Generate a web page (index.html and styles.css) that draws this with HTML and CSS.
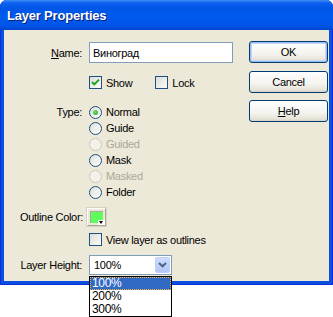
FILE: index.html
```html
<!DOCTYPE html>
<html lang="en">
<head>
    <meta charset="UTF-8">
    <title>Layer Properties</title>
    <link rel="stylesheet" href="styles.css">
</head>
<body>

<!-- Dialog window -->
<div class="window">
    <div class="titlebar">Layer Properties</div>

    <div class="client">
        <div class="fields">
            <div class="row row-name">
                <label class="caption" for="layerName"><u>N</u>ame:</label>
                <input class="textbox" id="layerName" type="text" value="Виноград">
            </div>

            <div class="row row-flags">
                <span class="caption"></span>
                <span class="check">
                    <svg width="11" height="11" viewBox="0 0 11 11"><path d="M2 5 L4.3 7.4 L9 2.6" fill="none" stroke="#21a121" stroke-width="2"/></svg>
                </span>
                <span class="opt">Show</span>
                <span class="check check-lock"></span>
                <span class="opt">Lock</span>
            </div>

            <div class="row-type">
                <span class="caption">Type:</span>
                <div class="choices">
                    <div class="choice"><span class="radio on"></span><span class="opt">Normal</span></div>
                    <div class="choice"><span class="radio"></span><span class="opt">Guide</span></div>
                    <div class="choice off"><span class="radio"></span><span class="opt">Guided</span></div>
                    <div class="choice"><span class="radio"></span><span class="opt">Mask</span></div>
                    <div class="choice off"><span class="radio"></span><span class="opt">Masked</span></div>
                    <div class="choice"><span class="radio"></span><span class="opt">Folder</span></div>
                </div>
            </div>

            <div class="row row-color">
                <span class="caption caption-color">Outline Color:</span>
                <span class="swatch">
                    <span class="swatch-fill"></span>
                    <span class="swatch-arrow"></span>
                </span>
            </div>

            <div class="row row-outline">
                <span class="caption"></span>
                <span class="check"></span>
                <span class="opt">View layer as outlines</span>
            </div>

            <div class="row row-height">
                <span class="caption">Layer Height:</span>
                <div class="combo">
                    <span class="combo-value">100%</span>
                    <span class="combo-btn">
                        <svg width="9" height="6" viewBox="0 0 9 6"><path d="M1 1 L4.5 4.3 L8 1" fill="none" stroke="#4d6185" stroke-width="2"/></svg>
                    </span>
                </div>
            </div>
        </div>

        <div class="actions">
            <button class="btn btn-default">OK</button>
            <button class="btn">Cancel</button>
            <button class="btn"><u>H</u>elp</button>
        </div>
    </div>
</div>

<!-- open list of the Layer Height combo, hanging below the dialog -->
<div class="combo-list">
    <div class="item selected">100%</div>
    <div class="item">200%</div>
    <div class="item">300%</div>
</div>

</body>
</html>
```

FILE: styles.css
```css
html, body {
    height: 317px;
}
body {
    margin: 0;
    background: #fff;
    font-family: "Liberation Sans", Arial, sans-serif;
    font-size: 11px;
    letter-spacing: -0.3px;
    color: #000;
}
.window {
    width: 333px;
    height: 285px;
    display: flex;
    flex-direction: column;
    background: #0a4fe0;
    border-radius: 7px 7px 0 0;
    box-shadow: inset 1px 0 #0831d9, inset -1px 0 #0831d9, inset 0 -1px #0831d9;
}
.titlebar {
    height: 28px;
    padding: 2px 0 0 7px;
    line-height: 28px;
    font-size: 13px;
    font-weight: bold;
    letter-spacing: -0.2px;
    color: #fff;
    text-shadow: 1px 1px #0a1e72;
    border-radius: 7px 7px 0 0;
    background: linear-gradient(#3d8ff7 0, #0d60ef 3px, #0056e6 8px, #005af0 55%, #0155e8 85%, #0046cc 100%);
}
.client {
    flex: 1;
    display: flex;
    margin: 0 4px 4px;
    padding-right: 1px;
    background: #ece9d8;
}
.fields {
    flex: 1;
    padding: 12px 0 0 16px;
}
.actions {
    width: 79px;
    display: flex;
    flex-direction: column;
    gap: 7.5px;
    margin-top: 11px;
}
.row {
    display: flex;
    align-items: center;
}
.caption {
    width: 62px;
    margin-right: 7px;
    flex-shrink: 0;
    text-align: right;
    white-space: nowrap;
}
.opt {
    margin-left: 4px;
    white-space: nowrap;
}

/* name */
.row-name {
    height: 21px;
}
.textbox {
    width: 144px;
    height: 21px;
    box-sizing: border-box;
    margin: 0;
    padding: 0 3px;
    border: 1px solid #7f9db9;
    background: #fff;
    font: inherit;
    letter-spacing: inherit;
    color: #000;
    outline: none;
}

/* show / lock */
.row-flags {
    height: 13px;
    margin-top: 13px;
}
.check {
    width: 13px;
    height: 13px;
    box-sizing: border-box;
    flex-shrink: 0;
    display: flex;
    align-items: center;
    justify-content: center;
    border: 1px solid #1c5180;
    background: linear-gradient(135deg, #dcdcd7, #fbfbf9);
}
.check-lock {
    margin-left: 23px;
}

/* type */
.row-type {
    display: flex;
    margin-top: 15px;
}
.row-type .caption {
    line-height: 16px;
}
.choice {
    height: 16px;
    display: flex;
    align-items: center;
}
.radio {
    width: 13px;
    height: 13px;
    box-sizing: border-box;
    flex-shrink: 0;
    border: 1px solid #1c5180;
    border-radius: 50%;
    background: linear-gradient(135deg, #dcdcd7, #fff);
    display: flex;
    align-items: center;
    justify-content: center;
}
.radio.on::after {
    content: "";
    width: 5px;
    height: 5px;
    border-radius: 50%;
    background: radial-gradient(circle at 40% 40%, #6fe36b, #21a121);
}
.choice.off .radio {
    border-color: #cac8bb;
    background: #f3f2ea;
}
.choice.off .opt {
    color: #aca899;
}

/* outline colour */
.row-color {
    height: 18px;
    margin-top: 8px;
}
.caption-color {
    margin-right: 5px;
}
.swatch {
    position: relative;
    width: 19px;
    height: 18px;
    box-sizing: border-box;
    border: 1px solid;
    border-color: #fff #aca899 #aca899 #fff;
    box-shadow: 0 0 0 1px #d6d2c2;
    background: #ece9d8;
}
.swatch-fill {
    position: absolute;
    left: 2px;
    top: 2px;
    width: 13px;
    height: 12px;
    box-sizing: border-box;
    border: 1px solid #aca899;
    border-width: 1px 0 0 1px;
    background: #5cff5c;
}
.swatch-arrow {
    position: absolute;
    right: 0;
    bottom: 0;
    width: 7px;
    height: 5px;
    background: #fff;
}
.swatch-arrow::after {
    content: "";
    position: absolute;
    left: 1px;
    top: 1px;
    border-left: 2.5px solid transparent;
    border-right: 2.5px solid transparent;
    border-top: 3px solid #000;
}

/* view layer as outlines */
.row-outline {
    height: 13px;
    margin-top: 7px;
}

/* layer height */
.row-height {
    height: 20px;
    margin-top: 9px;
}
.combo {
    width: 83px;
    height: 20px;
    box-sizing: border-box;
    display: flex;
    align-items: center;
    border: 1px solid #7f9db9;
    background: #fff;
}
.combo-value {
    padding-left: 4px;
}
.combo-btn {
    margin-left: auto;
    margin-right: 1px;
    width: 15px;
    height: 16px;
    box-sizing: border-box;
    display: flex;
    align-items: center;
    justify-content: center;
    border: 1px solid #bcd0fa;
    border-radius: 2px;
    background: linear-gradient(#cddcfd, #b3c8f5);
}
.combo-list {
    position: absolute;
    left: 89px;
    top: 276px;
    width: 83px;
    box-sizing: border-box;
    border: 1px solid #000;
    background: #fff;
    font-size: 12px;
}
.item {
    height: 13px;
    line-height: 13px;
    padding-left: 2px;
}
.item.selected {
    box-sizing: border-box;
    padding-left: 1px;
    line-height: 11px;
    border: 1px dotted #f2b441;
    background: #316ac5;
    color: #fff;
}

/* buttons */
.btn {
    width: 79px;
    height: 22px;
    margin: 0;
    padding: 0;
    border: 1px solid #003c74;
    border-radius: 3px;
    background: linear-gradient(#ffffff, #f4f3ee 60%, #e6e3d6 90%, #d6d0c5);
    font: inherit;
    letter-spacing: inherit;
    color: #000;
}
.btn-default {
    box-shadow: inset 0 0 0 1px #9cbcf0, inset 0 0 0 2px #c4d6f8;
}
```
